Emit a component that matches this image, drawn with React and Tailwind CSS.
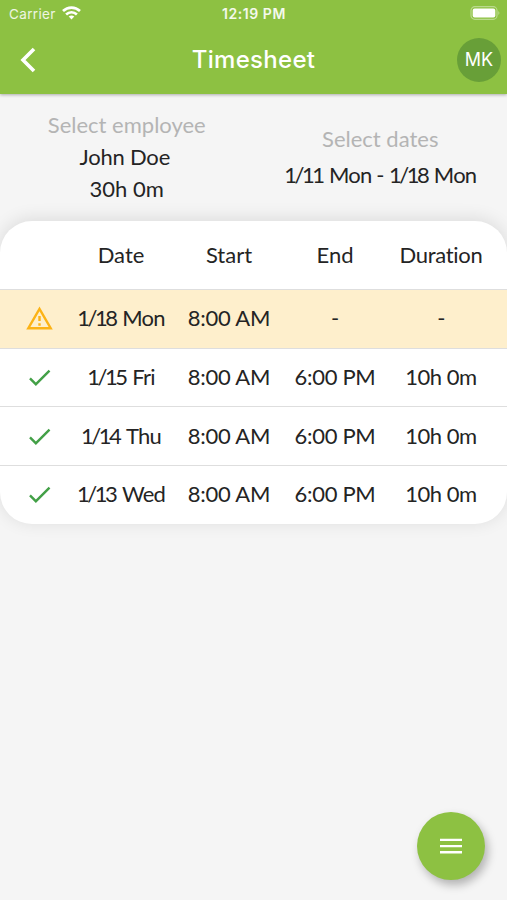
const rows = [
  { date: "1/18", day: "Mon", start: "8:00 AM", end: "-", duration: "-", warning: true },
  { date: "1/15", day: "Fri", start: "8:00 AM", end: "6:00 PM", duration: "10h 0m" },
  { date: "1/14", day: "Thu", start: "8:00 AM", end: "6:00 PM", duration: "10h 0m" },
  { date: "1/13", day: "Wed", start: "8:00 AM", end: "6:00 PM", duration: "10h 0m" },
];

const columns = "grid grid-cols-[53px_110px_106px_106px_106px] items-center px-[13px] text-center";

function DateLabel({ date, day }) {
  return (
    <span className="whitespace-nowrap">
      <span className="mr-px tracking-[-2.5px]">{date}</span>{" "}
      <span className="tracking-[-0.8px]">{day}</span>
    </span>
  );
}

function WarningIcon() {
  return (
    <svg className="mx-auto block h-[29px] w-[29px]" viewBox="0 0 24 24" fill="#fcb316">
      <path d="M12 5.99 19.53 19H4.47L12 5.99M12 2 1 21h22L12 2z" />
      <path d="M11 16h2v2h-2zM11 10h2v4h-2z" />
    </svg>
  );
}

function CheckIcon() {
  return (
    <svg className="mx-auto block h-[29px] w-[29px]" viewBox="0 0 24 24" fill="#43a047">
      <path d="M9 16.17 4.83 12l-1.42 1.41L9 19 21 7l-1.41-1.41L9 16.17z" />
    </svg>
  );
}

function StatusBar() {
  return (
    <div className="grid h-[28px] grid-cols-3 items-center pr-[6px] pl-[9px] text-[13.5px] leading-[28px]">
      <div className="flex items-center gap-[6px]">
        <span className="tracking-[0.35px] text-white/85">Carrier</span>
        <svg className="mb-[2px] h-[14px] w-[19px]" viewBox="0 0 19 14" fill="none" stroke="white" strokeWidth="2.7">
          <path d="M1 5C5.9.4 13.1.4 18 5" />
          <path d="M4.1 8.4C7.2 5.5 11.8 5.5 14.9 8.4" />
          <path d="M6.7 10.6Q9.5 8.2 12.3 10.6L9.5 13.5z" fill="white" stroke="none" />
        </svg>
      </div>
      <span className="-ml-[2px] text-center text-[14px] font-semibold tracking-[0.55px] whitespace-nowrap text-white/90">12:19 PM</span>
      <svg className="mb-[2px] h-[14px] w-[31px] justify-self-end" viewBox="0 0 31 14">
        <rect x="1" y=".7" width="26" height="12.6" rx="3.8" fill="none" stroke="white" strokeOpacity=".4" strokeWidth="1.2" />
        <rect x="2.7" y="2.4" width="22.6" height="9.2" rx="2" fill="white" />
        <path d="M28.4 5q2 2 0 4z" fill="white" fillOpacity=".45" />
      </svg>
    </div>
  );
}

export default function App() {
  return (
    <div className="flex h-[900px] w-[507px] flex-col overflow-hidden bg-[#f5f5f5] font-['Lato',sans-serif] text-[22px] text-[#242424]">
      <header className="z-10 h-[94px] shrink-0 bg-[#8dc142] font-['Inter',sans-serif] text-white shadow-[0_1px_3px_rgba(0,0,0,0.3)]">
        <StatusBar />
        <div className="grid h-[64px] grid-cols-[60px_1fr_60px] items-center">
          <svg className="ml-[19px] h-[26px] w-[18px]" viewBox="0 0 18 26" fill="none" stroke="white" strokeWidth="3.6">
            <path d="M15 2 4 13 15 24" />
          </svg>
          <h1 className="text-center text-[24px] font-medium tracking-[0.3px]">Timesheet</h1>
          <div className="ml-[10px] flex h-11 w-11 items-center justify-center rounded-full bg-[#689f38] pb-px text-[18px]">MK</div>
        </div>
      </header>

      <section className="grid h-[127px] shrink-0 grid-cols-2 text-center">
        <div className="pt-[15px] leading-8">
          <div className="text-[#b4b4b4]">Select employee</div>
          <div className="pr-1 tracking-[-0.2px]">John Doe</div>
          <div>30h 0m</div>
        </div>
        <div className="pt-[27px] leading-9">
          <div className="text-[#b4b4b4]">Select dates</div>
          <div className="whitespace-nowrap">
            <DateLabel date="1/11" day="Mon" /> <span className="-mx-px">-</span> <DateLabel date="1/18" day="Mon" />
          </div>
        </div>
      </section>

      <section className="h-[303px] shrink-0 overflow-hidden rounded-[32px] bg-white shadow-[0_-2px_18px_rgba(0,0,0,0.11)]">
        <div className={`${columns} h-[68px] pb-[2px]`}>
          <span />
          <span>Date</span>
          <span>Start</span>
          <span>End</span>
          <span className="tracking-[-0.3px]">Duration</span>
        </div>
        {rows.map((row) => (
          <div
            key={row.date}
            className={`${columns} h-[58.7px] border-t border-[#dedede] whitespace-nowrap ${row.warning ? "bg-[#feefcc]" : ""}`}
          >
            {row.warning ? <WarningIcon /> : <CheckIcon />}
            <span className="pb-[2px]">
              <DateLabel date={row.date} day={row.day} />
            </span>
            <span className="pb-[2px] tracking-[-0.2px]">{row.start}</span>
            <span className="pb-[2px] tracking-[-0.3px]">{row.end}</span>
            <span className="pb-[2px] tracking-[-0.5px]">{row.duration}</span>
          </div>
        ))}
      </section>

      <button
        aria-label="Menu"
        className="mt-auto mr-[22px] mb-5 flex h-[68px] w-[68px] shrink-0 items-center justify-center self-end rounded-full bg-[#8dc142] shadow-[3px_5px_10px_rgba(0,0,0,0.28)]"
      >
        <svg className="h-4 w-[22px]" viewBox="0 0 22 16" fill="white">
          <path d="M0 .7h22v2.4H0zM0 6.9h22v2.4H0zM0 13.1h22v2.4H0z" />
        </svg>
      </button>
    </div>
  );
}
